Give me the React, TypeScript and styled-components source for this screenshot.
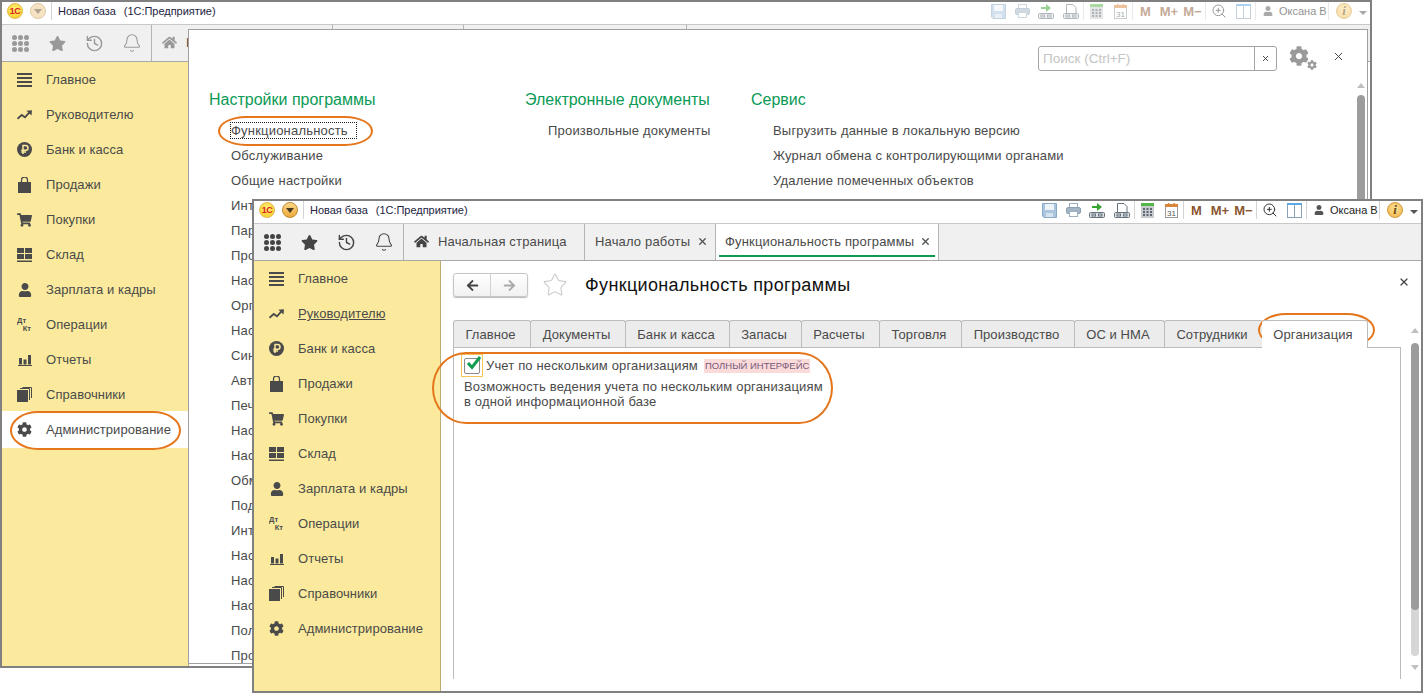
import React from "react";
import styled, { createGlobalStyle } from "styled-components";
import { FaArrowLeft, FaArrowRight, FaCog, FaHome, FaShoppingCart, FaStar, FaUser } from "react-icons/fa";
import { Bell, History, Star, X, ZoomIn } from "lucide-react";

const GlobalStyle = createGlobalStyle`
  html, body { margin: 0; background: #fff; }
  body { font-family: "Liberation Sans", Arial, sans-serif; font-size: 13px; color: #4a4a4a; }
`;

const Desktop = styled.div`
  position: relative;
  width: 1425px;
  height: 694px;
  overflow: hidden;
  background: #fff;
`;

const Win = styled.div<{ $x: number; $y: number; $w: number; $h: number }>`
  position: absolute;
  left: ${(p) => p.$x}px;
  top: ${(p) => p.$y}px;
  width: ${(p) => p.$w}px;
  height: ${(p) => p.$h}px;
  box-sizing: border-box;
  border: 2px solid #808080;
  background: #fff;
  display: flex;
  flex-direction: column;
  overflow: hidden;
`;

const TitleRow = styled.div`
  height: 18px;
  flex: none;
  display: flex;
  align-items: center;
  padding: 0 3px 4px 5px;
  border-bottom: 1px solid #c8c8c8;
  background: #fff;
`;

const Logo = styled.div`
  width: 16px;
  height: 16px;
  border-radius: 50%;
  background: radial-gradient(circle at 50% 35%, #fff27a, #f8c81c);
  border: 1px solid #e3b84a;
  box-sizing: border-box;
  display: flex;
  align-items: center;
  justify-content: center;
  color: #d8201c;
  font-size: 9px;
  font-weight: bold;
  letter-spacing: -0.5px;
`;

const Drop = styled.div<{ $off?: boolean }>`
  width: 16px;
  height: 16px;
  margin-left: 7px;
  border-radius: 50%;
  box-sizing: border-box;
  border: 1px solid ${(p) => (p.$off ? "#e0c9a0" : "#c08a2c")};
  background: ${(p) => (p.$off ? "#f6e3c4" : "linear-gradient(#fbd88a, #eea93a)")};
  display: flex;
  align-items: center;
  justify-content: center;
  &::after {
    content: "";
    border: 4px solid transparent;
    border-top: 5px solid ${(p) => (p.$off ? "#b0a590" : "#4a3a20")};
    border-bottom: 0;
  }
`;

const Sep = styled.div<{ $ml?: number; $mr?: number }>`
  width: 1px;
  height: 18px;
  flex: none;
  background: #d4d4d4;
  margin-left: ${(p) => p.$ml ?? 0}px;
  margin-right: ${(p) => p.$mr ?? 0}px;
`;

const BaseName = styled.div`
  font-size: 11px;
  letter-spacing: -0.03px;
  color: #23233f;
  white-space: nowrap;
  span { margin-left: 8px; }
`;

const Tools = styled.div<{ $off?: boolean }>`
  margin-left: auto;
  display: flex;
  align-items: center;
  height: 100%;
  opacity: ${(p) => (p.$off ? 0.5 : 1)};
`;

const Slot = styled.div<{ $w: number }>`
  width: ${(p) => p.$w}px;
  flex: none;
  display: flex;
  align-items: center;
  justify-content: center;
`;

const MemText = styled.span`
  font-size: 13px;
  font-weight: bold;
  color: #8a5630;
  white-space: nowrap;
`;

const UserName = styled.span`
  width: 49px;
  flex: none;
  font-size: 11px;
  color: #222;
  white-space: nowrap;
`;

const InfoBall = styled.div`
  width: 16px;
  height: 16px;
  border-radius: 50%;
  box-sizing: border-box;
  border: 1px solid #d19a3a;
  background: radial-gradient(circle at 50% 40%, #fde49a, #efb042);
  color: #6a4a10;
  font-family: "Liberation Serif", serif;
  font-style: italic;
  font-weight: bold;
  font-size: 13px;
  line-height: 14px;
  text-align: center;
`;

const Caret = styled.div`
  width: 8px;
  flex: none;
  height: 0;
  box-sizing: border-box;
  border: 4px solid transparent;
  border-top: 4px solid #555;
  border-bottom: 0;
  margin-top: 3px;
`;

const TabsRow = styled.div`
  height: 36px;
  flex: none;
  display: flex;
  background: #f0f0f0;
  border-bottom: 1px solid #a8a8a8;
`;

const Quick = styled.div<{ $off?: boolean }>`
  width: 150px;
  box-sizing: border-box;
  flex: none;
  display: flex;
  align-items: center;
  color: ${(p) => (p.$off ? "#999" : "#444")};
  border-right: 1px solid #b4b4b4;
`;

const QuickBtn = styled.div`
  width: 37px;
  display: flex;
  align-items: center;
  justify-content: center;
`;

const Tab = styled.div<{ $w: number; $active?: boolean }>`
  position: relative;
  width: ${(p) => p.$w}px;
  flex: none;
  box-sizing: border-box;
  display: flex;
  align-items: center;
  padding: 0 0 2px ${(p) => (p.$active ? 9 : 10)}px;
  border-right: 1px solid #b4b4b4;
  background: ${(p) => (p.$active ? "#fff" : "#f0f0f0")};
  color: #4a4a4a;
  white-space: nowrap;
  letter-spacing: 0.16px;
  &::after {
    content: "";
    display: ${(p) => (p.$active ? "block" : "none")};
    position: absolute;
    left: 3px;
    right: 3px;
    bottom: 3px;
    height: 2px;
    background: #0b9a50;
  }
`;

const HomeGlyph = styled(FaHome)`
  margin-right: 9px;
  flex: none;
`;

const TabClose = styled(X)`
  position: absolute;
  right: 7px;
  top: 12px;
  color: #555;
`;

const Main = styled.div`
  flex: 1;
  min-height: 0;
  display: flex;
`;

const Side = styled.div`
  width: 186px;
  flex: none;
  background: #fbea9d;
  border-right: 1px solid #b9ad72;
`;

const SideRow = styled.div<{ $active?: boolean }>`
  height: ${(p) => (p.$active ? 37 : 35)}px;
  margin: ${(p) => (p.$active ? "-1px 0" : "0")};
  display: flex;
  align-items: center;
  padding-left: 15px;
  background: ${(p) => (p.$active ? "#fff" : "transparent")};
  color: #4a4a4a;
  letter-spacing: 0.06px;
  white-space: nowrap;
`;

const SideIcon = styled.div`
  width: 15px;
  height: 16px;
  flex: none;
  margin-right: 14px;
  display: flex;
  align-items: center;
  justify-content: center;
  color: #4a4a4a;
`;

const SideLabel = styled.span<{ $link?: boolean }>`
  text-decoration: ${(p) => (p.$link ? "underline" : "none")};
`;

const Work = styled.div`
  flex: 1;
  min-width: 0;
  display: flex;
  flex-direction: column;
`;

const FormHead = styled.div`
  height: 24px;
  flex: none;
  display: flex;
  align-items: center;
  padding: 12px 11px 0 12px;
  margin-bottom: 23px;
`;

const NavPair = styled.div`
  width: 75px;
  height: 24px;
  box-sizing: border-box;
  display: flex;
  border: 1px solid #c6c6c6;
  border-radius: 3px;
  background: linear-gradient(#fff, #f1f1f1);
  box-shadow: 0 1px 1px #bbb;
`;

const NavBtn = styled.div<{ $off?: boolean }>`
  flex: 1;
  display: flex;
  align-items: center;
  justify-content: center;
  color: ${(p) => (p.$off ? "#aaa" : "#444")};
  & + & { border-left: 1px solid #d2d2d2; }
`;

const FavStar = styled(Star)`
  margin-left: 14px;
  color: #c9c9c9;
`;

const FormTitle = styled.div`
  margin-left: 17px;
  font-size: 18px;
  color: #111;
  white-space: nowrap;
  letter-spacing: 0.35px;
`;

const FormClose = styled(X)`
  margin-left: auto;
  margin-top: -6px;
  color: #444;
`;

const FormBody = styled.div`
  flex: 1;
  min-height: 0;
  display: flex;
  gap: 10px;
  padding: 0 2px 0 12px;
`;

const PageArea = styled.div`
  flex: 1;
  min-width: 0;
  display: flex;
  flex-direction: column;
  padding-bottom: 12px;
`;

const PageTabs = styled.div`
  display: flex;
  height: 27px;
  flex: none;
`;

const PageTab = styled.div<{ $w: number; $active?: boolean }>`
  width: ${(p) => p.$w}px;
  flex: none;
  box-sizing: border-box;
  display: flex;
  align-items: center;
  justify-content: center;
  padding-right: 3px;
  border: 1px solid #bcbcbc;
  border-left-width: ${(p) => (p.$active ? 0 : 1)}px;
  border-bottom: 0;
  border-radius: 3px 3px 0 0;
  margin-right: -1px;
  background: ${(p) => (p.$active ? "#fff" : "#ececec")};
  height: ${(p) => (p.$active ? 28 : 27)}px;
  position: relative;
  z-index: ${(p) => (p.$active ? 1 : 0)};
  color: #4a4a4a;
  letter-spacing: 0.08px;
  white-space: nowrap;
`;

const PageBox = styled.div`
  flex: 1;
  border: 1px solid #bcbcbc;
  border-bottom: 0;
  padding: 6px 7px;
`;

const CheckLine = styled.div`
  display: flex;
  align-items: center;
`;

const CheckFocus = styled.div`
  position: relative;
  width: 22px;
  height: 23px;
  box-sizing: border-box;
  flex: none;
  border: 1px solid #f3c557;
  display: flex;
  align-items: center;
  justify-content: center;
`;

const CheckBox = styled.div`
  width: 16px;
  height: 16px;
  box-sizing: border-box;
  border: 1px solid #8a8a8a;
  border-radius: 2px;
  background: #fff;
`;

const CheckMark = styled.svg`
  position: absolute;
  left: 3px;
  top: 0;
`;

const CheckText = styled.span`
  margin-left: 3px;
  letter-spacing: 0.15px;
  white-space: nowrap;
`;

const Badge = styled.span`
  margin-left: 6px;
  padding: 0 1px;
  background: #fbdada;
  color: #76597a;
  font-size: 9.5px;
  line-height: 14px;
  white-space: nowrap;
`;

const Hint = styled.div`
  margin: 2px 0 0 3px;
  line-height: 15px;
  letter-spacing: 0.17px;
  white-space: nowrap;
`;

const ScrollCol = styled.div`
  width: 8px;
  flex: none;
  display: flex;
  flex-direction: column;
  align-items: center;
  padding-top: 8px;
`;

const ArrowUp = styled.div`
  flex: none;
  border: 4px solid transparent;
  border-bottom: 5px solid #c0c0c0;
  border-top: 0;
`;

const ArrowDown = styled.div`
  flex: none;
  border: 4px solid transparent;
  border-top: 5px solid #c0c0c0;
  border-bottom: 0;
`;

const Track = styled.div<{ $h: number; $mt: number; $mb: number }>`
  width: 8px;
  height: ${(p) => p.$h}px;
  flex: none;
  margin: ${(p) => p.$mt}px 0 ${(p) => p.$mb}px;
  border-radius: 4px;
  background: #d6d6d6;
  overflow: hidden;
`;

const Thumb = styled.div<{ $h: number }>`
  height: ${(p) => p.$h}px;
  background: #9c9c9c;
  border-radius: 4px;
`;

/* the settings panel that is opened over the first window */
const Overlay = styled.div`
  position: absolute;
  left: 186px;
  top: 27px;
  width: 1180px;
  height: 635px;
  box-sizing: border-box;
  border: 1px solid #a0a0a0;
  background: #fff;
  display: flex;
  flex-direction: column;
`;

const OverHead = styled.div`
  flex: none;
  display: flex;
  align-items: flex-start;
  justify-content: flex-end;
  height: 29px;
  padding: 16px 22px 0 0;
`;

const Search = styled.div`
  width: 239px;
  height: 25px;
  box-sizing: border-box;
  display: flex;
  border: 1px solid #a4a4a4;
  border-radius: 3px;
`;

const SearchText = styled.div`
  flex: 1;
  padding-left: 4px;
  line-height: 23px;
  font-size: 13.5px;
  color: #c4c4c4;
`;

const SearchClear = styled.div`
  width: 21px;
  flex: none;
  border-left: 1px solid #a4a4a4;
  display: flex;
  align-items: center;
  justify-content: center;
  color: #444;
`;

const GearBox = styled.div`
  position: relative;
  width: 28px;
  height: 24px;
  margin-left: 12px;
  color: #9a9a9a;
`;

const GearSmall = styled(FaCog)`
  position: absolute;
  right: 0;
  bottom: 0;
`;

const OverClose = styled(X)`
  margin: 4px 0 0 15px;
  color: #444;
`;

const OverBody = styled.div`
  flex: 1;
  min-height: 0;
  display: flex;
  padding-right: 2px;
`;

const Columns = styled.div`
  flex: 1;
  display: grid;
  grid-template-columns: 316px 226px 1fr;
  padding: 12px 0 0 20px;
`;

const Heading = styled.div`
  height: 25px;
  margin-bottom: 6px;
  line-height: 25px;
  font-size: 16px;
  color: #0a9a55;
  white-space: nowrap;
`;

const Item = styled.div<{ $pl: number }>`
  height: 25px;
  line-height: 25px;
  padding-left: ${(p) => p.$pl}px;
  letter-spacing: 0.2px;
  white-space: nowrap;
`;

const Focused = styled.span`
  outline: 1px dotted #222;
  outline-offset: 0;
  padding-right: 8px;
  display: inline-block;
  line-height: 15px;
`;

const Ring = styled.div<{ $x: number; $y: number; $w: number; $h: number; $r: number }>`
  position: absolute;
  left: ${(p) => p.$x}px;
  top: ${(p) => p.$y}px;
  width: ${(p) => p.$w}px;
  height: ${(p) => p.$h}px;
  box-sizing: border-box;
  border: 2px solid #e5761c;
  border-radius: ${(p) => p.$r}px / 50%;
  pointer-events: none;
`;

const Dots = () => (
  <svg width="17" height="17" viewBox="0 0 17 17" fill="currentColor">
    {[2.5, 8.5, 14.5].flatMap((y) =>
      [2.5, 8.5, 14.5].map((x) => <circle key={`${x}-${y}`} cx={x} cy={y} r="2.5" />)
    )}
  </svg>
);

const IconMenu = () => (
  <svg width="15" height="14" viewBox="0 0 15 14" fill="currentColor">
    <rect y="0" width="15" height="2" />
    <rect y="4" width="15" height="2" />
    <rect y="8" width="15" height="2" />
    <rect y="12" width="15" height="2" />
  </svg>
);

const IconTrend = () => (
  <svg width="16" height="10" viewBox="0 0 16 10" fill="none">
    <path d="M0.5 9 L5 5 L8.5 7.5 L13.5 2" stroke="currentColor" strokeWidth="2" />
    <path d="M10 0.5 L16 0 L15.5 5.5 Z" fill="currentColor" />
  </svg>
);

const IconRuble = () => (
  <svg width="15" height="15" viewBox="0 0 15 15">
    <circle cx="7.5" cy="7.5" r="7.5" fill="currentColor" />
    <path d="M6 12 V3.5 H8.6 A2.4 2.4 0 0 1 8.6 8.3 H4.3 M4.3 10 H9" fill="none" stroke="#fbea9d" strokeWidth="1.5" />
  </svg>
);

const IconBag = () => (
  <svg width="13" height="16" viewBox="0 0 13 16" fill="currentColor">
    <path d="M0 5 H13 V16 H0 Z" />
    <path d="M3.5 7 V3 A3 3 0 0 1 9.5 3 V7" fill="none" stroke="currentColor" strokeWidth="1.3" />
  </svg>
);

const IconStore = () => (
  <svg width="15" height="14" viewBox="0 0 15 14" fill="currentColor">
    <rect x="0" y="0" width="7" height="5" />
    <rect x="8" y="0" width="7" height="5" />
    <rect x="0" y="6" width="7" height="5" />
    <rect x="8" y="6" width="7" height="5" />
    <rect x="0" y="12.5" width="15" height="1.5" />
  </svg>
);

const IconDtKt = () => (
  <svg width="16" height="15" viewBox="0 0 16 15" fill="currentColor" fontFamily="Liberation Sans" fontWeight="bold" fontSize="8">
    <text x="0" y="6">Дт</text>
    <text x="6" y="14">Кт</text>
  </svg>
);

const IconBars = () => (
  <svg width="14" height="12" viewBox="0 0 14 12" fill="currentColor">
    <rect x="1" y="4" width="3" height="6.5" />
    <rect x="5.5" y="5.5" width="3" height="5" />
    <rect x="10" y="1" width="3" height="9.5" />
    <rect x="0" y="11" width="14" height="1" />
  </svg>
);

const IconStack = () => (
  <svg width="15" height="15" viewBox="0 0 15 15" fill="currentColor">
    <rect x="0" y="3" width="11" height="12" />
    <path d="M3 1.5 H12.5 V13 M5.5 0.5 H14.5 V11" fill="none" stroke="currentColor" strokeWidth="1" />
  </svg>
);

const IconSave = () => (
  <svg width="15" height="15" viewBox="0 0 15 15">
    <path d="M0.5 0.5 H14.5 V14.5 H2 L0.5 13 Z" fill="#a9c5df" stroke="#8aa9c6" />
    <rect x="3" y="1" width="9" height="6" fill="#eef3f8" />
    <rect x="4" y="10" width="7" height="4" fill="#d6e2ee" />
  </svg>
);

const IconPrint = () => (
  <svg width="15" height="14" viewBox="0 0 15 14">
    <rect x="3.5" y="0.5" width="8" height="5" fill="#fff" stroke="#9cb0c2" />
    <rect x="0.5" y="4.5" width="14" height="6" rx="1.5" fill="#a4b6c6" stroke="#8aa0b4" />
    <rect x="3.5" y="8.5" width="8" height="5" fill="#fff" stroke="#9cb0c2" />
  </svg>
);

const Tray = () => (
  <>
    <rect x="0.5" y="9.5" width="15" height="5" rx="1" fill="#dfe3e6" stroke="#66727c" />
    <rect x="3" y="11" width="3.5" height="2" fill="none" stroke="#66727c" />
    <rect x="9.5" y="11" width="3.5" height="2" fill="none" stroke="#66727c" />
  </>
);

const IconExport = () => (
  <svg width="16" height="15" viewBox="0 0 16 15">
    <Tray />
    <path d="M3 3 H8 V0 L13 4 L8 8 V5 H3 Z" fill="#37a62e" />
  </svg>
);

const IconScan = () => (
  <svg width="16" height="15" viewBox="0 0 16 15">
    <path d="M3.5 9 V0.5 H10 L13 3.5 V9" fill="#fff" stroke="#66727c" />
    <Tray />
  </svg>
);

const IconCalc = () => (
  <svg width="13" height="15" viewBox="0 0 13 15">
    <rect x="0" y="0" width="13" height="15" fill="#c9ccce" />
    <rect x="0" y="0" width="13" height="3" fill="#54b648" />
    {[5, 8, 11].flatMap((y) =>
      [2, 5.5, 9].map((x) => <rect key={`${x}-${y}`} x={x} y={y} width="2" height="2" fill="#5c6670" />)
    )}
  </svg>
);

const IconDate = () => (
  <svg width="13" height="15" viewBox="0 0 13 15">
    <rect x="0.5" y="1.5" width="12" height="13" fill="#fff" stroke="#9a9a9a" />
    <rect x="0" y="1" width="13" height="3" fill="#d9863c" />
    <rect x="3" y="0" width="1.5" height="2.5" fill="#d9863c" />
    <rect x="8.5" y="0" width="1.5" height="2.5" fill="#d9863c" />
    <text x="6.5" y="12.5" textAnchor="middle" fontSize="8" fontFamily="Liberation Sans" fill="#555">31</text>
  </svg>
);

const IconPanels = () => (
  <svg width="15" height="15" viewBox="0 0 15 15" fill="none">
    <rect x="0.5" y="0.5" width="14" height="14" stroke="#8aa0b4" />
    <rect x="0" y="0" width="15" height="2" fill="#5fa7e0" />
    <path d="M7.5 2 V15" stroke="#8aa0b4" />
  </svg>
);

const sideItems: [string, React.ReactNode][] = [
  ["Главное", <IconMenu />],
  ["Руководителю", <IconTrend />],
  ["Банк и касса", <IconRuble />],
  ["Продажи", <IconBag />],
  ["Покупки", <FaShoppingCart size={16} />],
  ["Склад", <IconStore />],
  ["Зарплата и кадры", <FaUser size={14} />],
  ["Операции", <IconDtKt />],
  ["Отчеты", <IconBars />],
  ["Справочники", <IconStack />],
  ["Администрирование", <FaCog size={15} />],
];

const Sidebar = ({ active, link }: { active?: string; link?: string }) => (
  <Side>
    {sideItems.map(([label, icon]) => (
      <SideRow key={label} $active={label === active}>
        <SideIcon>{icon}</SideIcon>
        <SideLabel $link={label === link}>{label}</SideLabel>
      </SideRow>
    ))}
  </Side>
);

const TitleBar = ({ off }: { off?: boolean }) => (
  <TitleRow>
    <Logo>1С</Logo>
    <Drop $off={off} />
    <Sep $ml={5} $mr={6} />
    <BaseName>
      Новая база<span>(1С:Предприятие)</span>
    </BaseName>
    <Tools $off={off}>
      <Slot $w={23}><IconSave /></Slot>
      <Slot $w={24}><IconPrint /></Slot>
      <Slot $w={24}><IconExport /></Slot>
      <Slot $w={25}><IconScan /></Slot>
      <Sep />
      <Slot $w={24}><IconCalc /></Slot>
      <Slot $w={24}><IconDate /></Slot>
      <Sep />
      <Slot $w={25}><MemText>М</MemText></Slot>
      <Slot $w={22}><MemText>М+</MemText></Slot>
      <Slot $w={25}><MemText>М−</MemText></Slot>
      <Sep />
      <Slot $w={25}><ZoomIn size={16} color="#333" strokeWidth={1.5} /></Slot>
      <Slot $w={24}><IconPanels /></Slot>
      <Sep />
      <Slot $w={23}><FaUser size={10} color="#555" /></Slot>
      <UserName>Оксана В</UserName>
      <Sep />
      <Slot $w={30}><InfoBall>i</InfoBall></Slot>
      <Caret />
    </Tools>
  </TitleRow>
);

const QuickBar = ({ off }: { off?: boolean }) => (
  <Quick $off={off}>
    <QuickBtn><Dots /></QuickBtn>
    <QuickBtn><FaStar size={17} /></QuickBtn>
    <QuickBtn><History size={19} strokeWidth={1.8} /></QuickBtn>
    <QuickBtn><Bell size={20} strokeWidth={1.3} /></QuickBtn>
  </Quick>
);

// in the back window the settings panel hides everything but the start of the first tab
const TabStrip = ({ off }: { off?: boolean }) => (
  <TabsRow>
    <QuickBar off={off} />
    <Tab $w={181}><HomeGlyph size={15} color={off ? "#999" : "#444"} />{off ? "Н" : "Начальная страница"}</Tab>
    <Tab $w={131}>{!off && <>Начало работы<TabClose size={11} strokeWidth={3} /></>}</Tab>
    <Tab $w={223} $active={!off}>{!off && <>Функциональность программы<TabClose size={11} strokeWidth={3} /></>}</Tab>
  </TabsRow>
);

const pageTabs: [string, number][] = [
  ["Главное", 78],
  ["Документы", 96],
  ["Банк и касса", 105],
  ["Запасы", 73],
  ["Расчеты", 79],
  ["Торговля", 83],
  ["Производство", 114],
  ["ОС и НМА", 91],
  ["Сотрудники", 99],
  ["Организация", 106],
];

// only the part that shows left of the front window
const firstColumn = [
  "Обслуживание",
  "Общие настройки",
  "Инт",
  "Пар",
  "Про",
  "Нас",
  "Орг",
  "Нас",
  "Син",
  "Авт",
  "Печ",
  "Нас",
  "Нас",
  "Обм",
  "Под",
  "Инт",
  "Нас",
  "Нас",
  "Нас",
  "Пол",
  "Про",
];

const serviceColumn = [
  "Выгрузить данные в локальную версию",
  "Журнал обмена с контролирующими органами",
  "Удаление помеченных объектов",
];

export default function App() {
  return (
    <Desktop>
      <GlobalStyle />

      <Win $x={0} $y={0} $w={1372} $h={668}>
        <TitleBar off />
        <TabStrip off />
        <Main>
          <Sidebar active="Администрирование" />
        </Main>
        <Overlay>
          <OverHead>
            <Search>
              <SearchText>Поиск (Ctrl+F)</SearchText>
              <SearchClear><X size={9} strokeWidth={2.5} /></SearchClear>
            </Search>
            <GearBox>
              <FaCog size={20} />
              <GearSmall size={10} />
            </GearBox>
            <OverClose size={13} strokeWidth={1.8} />
          </OverHead>
          <OverBody>
            <Columns>
              <div>
                <Heading>Настройки программы</Heading>
                <Item $pl={22}><Focused>Функциональность</Focused></Item>
                {firstColumn.map((t, i) => (
                  <Item key={i} $pl={22}>{t}</Item>
                ))}
              </div>
              <div>
                <Heading>Электронные документы</Heading>
                <Item $pl={23}>Произвольные документы</Item>
              </div>
              <div>
                <Heading>Сервис</Heading>
                {serviceColumn.map((t) => (
                  <Item key={t} $pl={22}>{t}</Item>
                ))}
              </div>
            </Columns>
            <ScrollCol>
              <ArrowUp />
              <Track $h={500} $mt={7} $mb={0}><Thumb $h={440} /></Track>
            </ScrollCol>
          </OverBody>
        </Overlay>
      </Win>

      <Win $x={252} $y={199} $w={1171} $h={494}>
        <TitleBar />
        <TabStrip />
        <Main>
          <Sidebar link="Руководителю" />
          <Work>
            <FormHead>
              <NavPair>
                <NavBtn><FaArrowLeft size={13} /></NavBtn>
                <NavBtn $off><FaArrowRight size={13} /></NavBtn>
              </NavPair>
              <FavStar size={26} strokeWidth={1} />
              <FormTitle>Функциональность программы</FormTitle>
              <FormClose size={12} strokeWidth={2.5} />
            </FormHead>
            <FormBody>
              <PageArea>
                <PageTabs>
                  {pageTabs.map(([t, w]) => (
                    <PageTab key={t} $w={w} $active={t === "Организация"}>{t}</PageTab>
                  ))}
                </PageTabs>
                <PageBox>
                  <CheckLine>
                    <CheckFocus>
                      <CheckBox />
                      <CheckMark width="17" height="16" viewBox="0 0 17 16" fill="none">
                        <path d="M3 8 L7 12.5 L15 2" stroke="#0f9d4f" strokeWidth="3" />
                      </CheckMark>
                    </CheckFocus>
                    <CheckText>Учет по нескольким организациям</CheckText>
                    <Badge>ПОЛНЫЙ ИНТЕРФЕЙС</Badge>
                  </CheckLine>
                  <Hint>
                    Возможность ведения учета по нескольким организациям
                    <br />
                    в одной информационной базе
                  </Hint>
                </PageBox>
              </PageArea>
              <ScrollCol>
                <ArrowUp />
                <Track $h={313} $mt={10} $mb={9}><Thumb $h={267} /></Track>
                <ArrowDown />
              </ScrollCol>
            </FormBody>
          </Work>
        </Main>
      </Win>

      <Ring $x={218} $y={116} $w={155} $h={30} $r={28} />
      <Ring $x={10} $y={411} $w={171} $h={39} $r={28} />
      <Ring $x={1258} $y={313} $w={117} $h={34} $r={28} />
      <Ring $x={432} $y={352} $w={401} $h={72} $r={34} />
    </Desktop>
  );
}
